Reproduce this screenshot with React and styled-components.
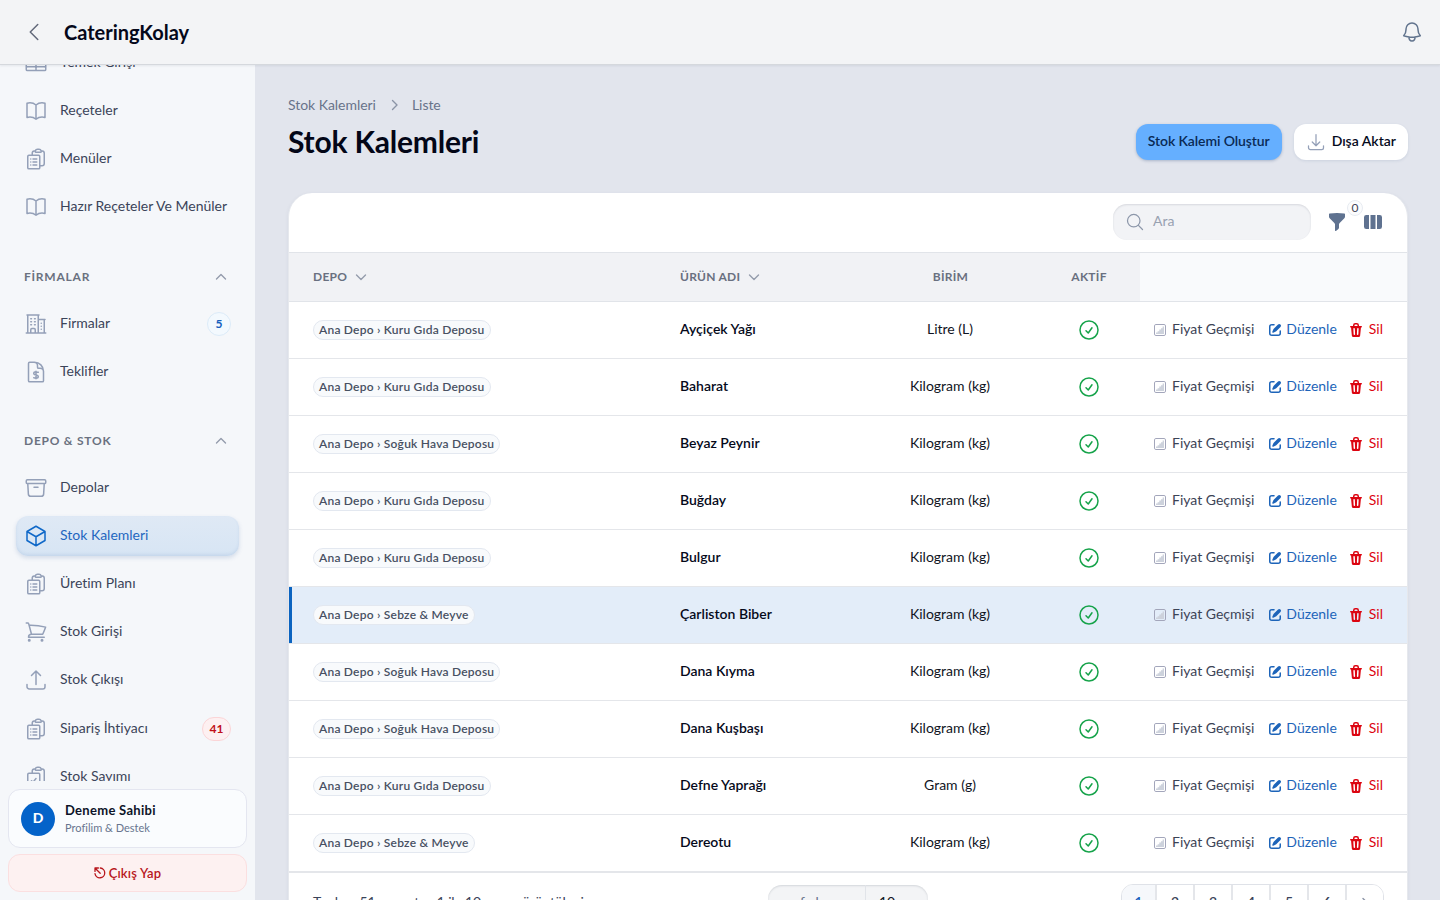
import React from 'react';
import styled, { createGlobalStyle, css } from 'styled-components';
import {
    HiOutlineTableCells,
    HiOutlineBookOpen,
    HiOutlineClipboardDocumentList,
    HiOutlineClipboardDocumentCheck,
    HiOutlineBuildingOffice2,
    HiOutlineArchiveBox,
    HiOutlineCube,
    HiOutlineShoppingCart,
    HiOutlineArrowUpTray,
    HiOutlineArrowDownTray,
    HiOutlineBell,
    HiOutlineChevronLeft,
    HiOutlineMagnifyingGlass,
    HiOutlineCheckCircle,
} from 'react-icons/hi2';

const stroke = {
    fill: 'none',
    stroke: 'currentColor',
    strokeLinecap: 'round',
    strokeLinejoin: 'round',
};

const DocumentDollar = () => (
    <svg viewBox="0 0 24 24" strokeWidth="1.5" {...stroke}>
        <path d="M19.5 14.25v-2.625a3.375 3.375 0 0 0-3.375-3.375h-1.5A1.125 1.125 0 0 1 13.5 7.125v-1.5a3.375 3.375 0 0 0-3.375-3.375H8.25m3.75 9v7.5m2.25-6.466a9.016 9.016 0 0 0-3.461-.203c-.536.072-.974.478-1.021 1.017a4.559 4.559 0 0 0-.018.402c0 .464.336.844.775.994l2.95 1.012c.44.15.775.53.775.994 0 .136-.006.27-.018.402-.047.539-.485.945-1.021 1.017a9.077 9.077 0 0 1-3.461-.203M10.5 2.25H5.625c-.621 0-1.125.504-1.125 1.125v17.25c0 .621.504 1.125 1.125 1.125h12.75c.621 0 1.125-.504 1.125-1.125V11.25a9 9 0 0 0-9-9Z" />
    </svg>
);

const Chevron = ({ d = 'M1.5 2l4.5 4.5 4.5-4.5', w = 12, h = 8 }) => (
    <svg width={w} height={h} viewBox={`0 0 ${w} ${h}`} strokeWidth="1.4" {...stroke}>
        <path d={d} />
    </svg>
);

const ChartIcon = () => (
    <svg width="12" height="12" viewBox="0 0 12 12">
        <rect x="0.5" y="0.5" width="11" height="11" rx="1.4" fill="none" stroke="#a3a6bb" />
        <path d="M2 10V8.6h1.6V7.2h1.7V5.6h1.7V4.2h1.6V2.6H10V10z" fill="#cdd2dc" />
    </svg>
);

const PencilIcon = () => (
    <svg width="16" height="16" viewBox="0 0 16 16" fill="currentColor">
        <path d="M13.488 2.513a1.75 1.75 0 0 0-2.475 0L6.75 6.774a2.75 2.75 0 0 0-.596.892l-.848 2.047a.75.75 0 0 0 .98.98l2.047-.848a2.75 2.75 0 0 0 .892-.596l4.261-4.262a1.75 1.75 0 0 0 0-2.474Z" />
        <path d="M4.75 3.5c-.69 0-1.25.56-1.25 1.25v6.5c0 .69.56 1.25 1.25 1.25h6.5c.69 0 1.25-.56 1.25-1.25V9A.75.75 0 0 1 14 9v2.25A2.75 2.75 0 0 1 11.25 14h-6.5A2.75 2.75 0 0 1 2 11.25v-6.5A2.75 2.75 0 0 1 4.75 2H7a.75.75 0 0 1 0 1.5H4.75Z" />
    </svg>
);

const TrashIcon = () => (
    <svg width="16" height="16" viewBox="0 0 16 16" fill="currentColor">
        <path
            fillRule="evenodd"
            d="M5 3.25V4H2.75a.75.75 0 0 0 0 1.5h.3l.815 8.15A1.5 1.5 0 0 0 5.357 15h5.285a1.5 1.5 0 0 0 1.493-1.35l.815-8.15h.3a.75.75 0 0 0 0-1.5H11v-.75A2.25 2.25 0 0 0 8.75 1h-1.5A2.25 2.25 0 0 0 5 3.25Zm2.25-.75a.75.75 0 0 0-.75.75V4h3v-.75a.75.75 0 0 0-.75-.75h-1.5ZM6.05 6a.75.75 0 0 1 .787.713l.275 5.5a.75.75 0 0 1-1.498.075l-.275-5.5A.75.75 0 0 1 6.05 6Zm3.9 0a.75.75 0 0 1 .712.787l-.275 5.5a.75.75 0 0 1-1.498-.075l.275-5.5a.75.75 0 0 1 .786-.711Z"
        />
    </svg>
);

const FunnelIcon = () => (
    <svg width="20" height="20" viewBox="0 0 20 20" fill="currentColor">
        <path d="M2.628 1.601C5.028 1.206 7.49 1 10 1s4.973.206 7.372.601a.75.75 0 0 1 .628.74v2.288a2.25 2.25 0 0 1-.659 1.59l-4.682 4.683a2.25 2.25 0 0 0-.659 1.59v3.037c0 .684-.31 1.33-.844 1.757l-1.937 1.55A.75.75 0 0 1 8 18.25v-5.757a2.25 2.25 0 0 0-.659-1.591L2.659 6.22A2.25 2.25 0 0 1 2 4.629V2.34a.75.75 0 0 1 .628-.74Z" />
    </svg>
);

const ColumnsIcon = () => (
    <svg width="20" height="20" viewBox="0 0 20 20" fill="currentColor">
        <path d="M14 17h2.75A2.25 2.25 0 0 0 19 14.75v-9.5A2.25 2.25 0 0 0 16.75 3H14v14ZM12.5 3h-5v14h5V3ZM3.25 3H6v14H3.25A2.25 2.25 0 0 1 1 14.75v-9.5A2.25 2.25 0 0 1 3.25 3Z" />
    </svg>
);

const LogoutIcon = () => (
    <svg width="12" height="12" viewBox="0 0 12 12" strokeWidth="1.3" {...stroke}>
        <path d="M6.3 1A4.9 4.9 0 1 1 1 6.6M1.2 1.2l5 5M1 4.4V1h3.4" />
    </svg>
);

const groups = [
    {
        items: [
            { label: 'Yemek Girişi', icon: HiOutlineTableCells },
            { label: 'Reçeteler', icon: HiOutlineBookOpen },
            { label: 'Menüler', icon: HiOutlineClipboardDocumentList },
            { label: 'Hazır Reçeteler Ve Menüler', icon: HiOutlineBookOpen },
        ],
    },
    {
        title: 'FİRMALAR',
        items: [
            { label: 'Firmalar', icon: HiOutlineBuildingOffice2, badge: '5' },
            { label: 'Teklifler', icon: DocumentDollar },
        ],
    },
    {
        title: 'DEPO & STOK',
        items: [
            { label: 'Depolar', icon: HiOutlineArchiveBox },
            { label: 'Stok Kalemleri', icon: HiOutlineCube, active: true },
            { label: 'Üretim Planı', icon: HiOutlineClipboardDocumentList },
            { label: 'Stok Girişi', icon: HiOutlineShoppingCart },
            { label: 'Stok Çıkışı', icon: HiOutlineArrowUpTray },
            { label: 'Sipariş İhtiyacı', icon: HiOutlineClipboardDocumentList, badge: '41', danger: true },
            { label: 'Stok Sayımı', icon: HiOutlineClipboardDocumentCheck },
        ],
    },
];

const KURU = 'Ana Depo › Kuru Gıda Deposu';
const SOGUK = 'Ana Depo › Soğuk Hava Deposu';
const SEBZE = 'Ana Depo › Sebze & Meyve';

const rows = [
    [KURU, 'Ayçiçek Yağı', 'Litre (L)'],
    [KURU, 'Baharat', 'Kilogram (kg)'],
    [SOGUK, 'Beyaz Peynir', 'Kilogram (kg)'],
    [KURU, 'Buğday', 'Kilogram (kg)'],
    [KURU, 'Bulgur', 'Kilogram (kg)'],
    [SEBZE, 'Çarliston Biber', 'Kilogram (kg)'],
    [SOGUK, 'Dana Kıyma', 'Kilogram (kg)'],
    [SOGUK, 'Dana Kuşbaşı', 'Kilogram (kg)'],
    [KURU, 'Defne Yaprağı', 'Gram (g)'],
    [SEBZE, 'Dereotu', 'Kilogram (kg)'],
];

const selectedRow = 5;

const App = () => (
    <>
        <GlobalStyle />
        <Page>
            <Topbar>
                <BackButton><HiOutlineChevronLeft /></BackButton>
                <Brand>CateringKolay</Brand>
                <BellButton><HiOutlineBell /></BellButton>
            </Topbar>
            <Body>
                <Sidebar>
                    <Nav>
                        {groups.map((group, i) => (
                            <NavGroup key={i}>
                                {group.title && (
                                    <GroupTitle>
                                        {group.title}
                                        <Chevron d="M1.5 6L6 1.5 10.5 6" />
                                    </GroupTitle>
                                )}
                                {group.items.map(({ label, icon: Icon, badge, danger, active }) => (
                                    <NavItem key={label} $active={active} $tall={danger}>
                                        <Icon />
                                        <NavLabel>{label}</NavLabel>
                                        {badge && <NavBadge $danger={danger}>{badge}</NavBadge>}
                                    </NavItem>
                                ))}
                            </NavGroup>
                        ))}
                    </Nav>
                    <SidebarFooter>
                        <Profile>
                            <Avatar>D</Avatar>
                            <ProfileText>
                                <ProfileName>Deneme Sahibi</ProfileName>
                                <ProfileSub>Profilim &amp; Destek</ProfileSub>
                            </ProfileText>
                        </Profile>
                        <Logout><LogoutIcon />Çıkış Yap</Logout>
                    </SidebarFooter>
                </Sidebar>
                <Main>
                    <Breadcrumb>
                        <span>Stok Kalemleri</span>
                        <Chevron d="M2.5 1.5L7 6l-4.5 4.5" w={8} h={12} />
                        <span>Liste</span>
                    </Breadcrumb>
                    <Heading>
                        <Title>Stok Kalemleri</Title>
                        <Actions>
                            <Button $primary><Lifted>Stok Kalemi Oluştur</Lifted></Button>
                            <Button><HiOutlineArrowDownTray /><Lifted>Dışa Aktar</Lifted></Button>
                        </Actions>
                    </Heading>
                    <Card>
                        <Toolbar>
                            <Search><HiOutlineMagnifyingGlass /><Lifted>Ara</Lifted></Search>
                            <Tool>
                                <FunnelIcon />
                                <ToolBadge>0</ToolBadge>
                            </Tool>
                            <Tool><ColumnsIcon /></Tool>
                        </Toolbar>
                        <HeadRow>
                            <HeadCell $pad>DEPO <Chevron /></HeadCell>
                            <HeadCell $pad>ÜRÜN ADI <Chevron /></HeadCell>
                            <HeadCell $center>BİRİM</HeadCell>
                            <HeadCell $center>AKTİF</HeadCell>
                            <HeadCell $plain />
                        </HeadRow>
                        {rows.map(([depot, name, unit], i) => (
                            <Row key={name} $selected={i === selectedRow}>
                                <Cell $pad><Pill>{depot}</Pill></Cell>
                                <Cell $pad><ProductName>{name}</ProductName></Cell>
                                <Cell $center><Lifted>{unit}</Lifted></Cell>
                                <Cell $center><Check /></Cell>
                                <RowActions>
                                    <RowAction $color="#3b4356" $gap="6px"><ChartIcon /><Lifted>Fiyat Geçmişi</Lifted></RowAction>
                                    <RowAction $color="#1d64b9" $gap="3px" $offset="1px"><PencilIcon /><Lifted>Düzenle</Lifted></RowAction>
                                    <RowAction $color="#dc0511" $gap="5px" $offset="-1px"><TrashIcon /><Lifted>Sil</Lifted></RowAction>
                                </RowActions>
                            </Row>
                        ))}
                        <Footer>
                            <Summary>Toplam 51 sonuçtan 1 ile 10 arası görüntüleniyor</Summary>
                            <PerPage>
                                <PerPageLabel>sayfa başına</PerPageLabel>
                                <PerPageValue>10</PerPageValue>
                            </PerPage>
                            <Pager>
                                {['1', '2', '3', '4', '5', '6'].map((p) => (
                                    <PageButton key={p} $active={p === '1'}>{p}</PageButton>
                                ))}
                                <PageButton><Chevron d="M2 1.5L6.5 6 2 10.5" w={8} h={12} /></PageButton>
                            </Pager>
                        </Footer>
                    </Card>
                </Main>
            </Body>
        </Page>
    </>
);

const GlobalStyle = createGlobalStyle`
    * {
        box-sizing: border-box;
    }
    body {
        margin: 0;
        overflow: hidden;
        font-family: Lato, "Noto Sans", sans-serif;
        font-size: 14px;
        line-height: 20px;
        font-variant-ligatures: none;
        color: #101423;
    }
    svg {
        display: block;
        flex-shrink: 0;
    }
`;

const Page = styled.div`
    height: 900px;
    display: flex;
    flex-direction: column;
    overflow: hidden;
    background: #e2e5ed;
`;

const Topbar = styled.header`
    height: 65px;
    flex-shrink: 0;
    display: flex;
    align-items: center;
    padding: 0 16px 0 22px;
    background: #f3f4f6;
    border-bottom: 1px solid #d5d8dd;
    box-shadow: 0 1px 2px rgba(30, 40, 60, 0.08);
    z-index: 1;
`;

const BackButton = styled.div`
    width: 42px;
    color: #62697a;

    svg {
        width: 24px;
        height: 24px;
    }
`;

const Brand = styled.div`
    flex: 1;
    font-size: 20px;
    font-weight: 700;
    letter-spacing: -0.02px;
    color: #05081a;
`;

const BellButton = styled.div`
    color: #62748e;

    svg {
        width: 24px;
        height: 24px;
    }
`;

const Body = styled.div`
    flex: 1;
    min-height: 0;
    display: flex;
`;

const Sidebar = styled.aside`
    width: 255px;
    flex-shrink: 0;
    display: flex;
    flex-direction: column;
    background: #f5f7fa;
`;

const Nav = styled.nav`
    height: 716px;
    padding: 0 16px;
    overflow: hidden;
    display: flex;
    flex-direction: column;
    justify-content: flex-end;
    gap: 30px;

    & > :last-child {
        margin-bottom: -16px;
    }
`;

const NavGroup = styled.div`
    display: flex;
    flex-direction: column;
    gap: 8px;

    &:first-child {
        margin-bottom: 1px;
    }
`;

const GroupTitle = styled.div`
    height: 38px;
    display: flex;
    align-items: center;
    justify-content: space-between;
    padding: 0 12px 0 8px;
    font-size: 12px;
    font-weight: 700;
    letter-spacing: 0.76px;
    color: #6a7180;

    svg {
        color: #949cac;
    }
`;

const NavItem = styled.div`
    height: ${props => (props.$tall ? '41px' : '40px')};
    flex-shrink: 0;
    display: flex;
    align-items: center;
    gap: 12px;
    padding: 0 8px;
    border-radius: 12px;
    color: #3b4459;

    svg {
        width: 24px;
        height: 24px;
        color: #94a0b8;
    }

    ${props => props.$active && css`
        color: #1f66c0;
        background: linear-gradient(#dfe9f5, #d7e5f4);
        box-shadow: 0 2px 4px rgba(60, 100, 160, 0.18), inset 0 -2px 3px rgba(110, 150, 200, 0.16);

        svg {
            color: #0f68c8;
        }
    `}
`;

const NavLabel = styled.div`
    flex: 1;
    padding-bottom: 2px;
    white-space: nowrap;
`;

const NavBadge = styled.div`
    min-width: 24px;
    height: 24px;
    padding: 0 6.5px;
    display: flex;
    align-items: center;
    justify-content: center;
    border: 1px solid ${props => (props.$danger ? '#fbd5d7' : '#dcebf8')};
    border-radius: 12px;
    font-size: 12px;
    font-weight: 700;
    color: ${props => (props.$danger ? '#c11119' : '#1560bd')};
    background: ${props => (props.$danger ? '#fdf0f1' : '#f3f9fe')};
`;

const SidebarFooter = styled.div`
    flex: 1;
    display: flex;
    flex-direction: column;
    gap: 6px;
    padding: 8px 8px 0;
`;

const Profile = styled.div`
    height: 59px;
    display: flex;
    align-items: center;
    gap: 10px;
    padding: 0 12px;
    border: 1px solid #e4e6f0;
    border-radius: 12px;
    background: #fafcfe;
`;

const Avatar = styled.div`
    width: 34px;
    height: 34px;
    padding-bottom: 1px;
    display: flex;
    align-items: center;
    justify-content: center;
    border-radius: 50%;
    font-weight: 900;
    color: white;
    background: #0463c9;
`;

const ProfileText = styled.div`
    padding-bottom: 1px;
`;

const ProfileName = styled.div`
    font-size: 13px;
    line-height: 18px;
    font-weight: 700;
    letter-spacing: 0.3px;
    color: #0d1428;
`;

const ProfileSub = styled.div`
    font-size: 11px;
    line-height: 17px;
    color: #68758f;
`;

const Logout = styled.div`
    height: 38px;
    display: flex;
    align-items: center;
    justify-content: center;
    gap: 3px;
    border: 1px solid #fbdfe0;
    border-radius: 12px;
    font-size: 13px;
    font-weight: 600;
    letter-spacing: 0.2px;
    color: #b8161c;
    background: #fdf1f1;
`;

const Main = styled.main`
    flex: 1;
    padding: 30px 32px 0 33px;
`;

const Breadcrumb = styled.div`
    height: 20px;
    display: flex;
    align-items: center;
    gap: 14px;
    letter-spacing: -0.04px;
    color: #68738a;

    svg {
        color: #8b94a6;
    }
`;

const Heading = styled.div`
    height: 36px;
    margin-top: 9px;
    display: flex;
    align-items: center;
    justify-content: space-between;
`;

const Title = styled.h1`
    margin: 0;
    padding-bottom: 2px;
    font-size: 30px;
    line-height: 36px;
    font-weight: 700;
    letter-spacing: -0.2px;
    color: #030617;
`;

const Actions = styled.div`
    display: flex;
    gap: 12px;
`;

const Button = styled.div`
    height: 36px;
    display: flex;
    align-items: center;
    gap: 6px;
    padding: 0 12px;
    border-radius: 12px;
    font-weight: 600;
    letter-spacing: ${props => (props.$primary ? '-0.1px' : 0)};
    white-space: nowrap;
    color: ${props => (props.$primary ? '#0a2a55' : '#050a1c')};
    background: ${props => (props.$primary ? '#65afff' : 'white')};
    box-shadow: 0 1px 3px rgba(40, 70, 120, ${props => (props.$primary ? 0.3 : 0.12)});

    svg {
        width: 20px;
        height: 20px;
        color: #94a0b8;
    }
`;

/* Lato sits a touch low next to icons */
const Lifted = styled.span`
    padding-bottom: 2px;
`;

const Card = styled.section`
    height: 800px;
    margin-top: 33px;
    overflow: hidden;
    border-left: 1px solid #e6e8ed;
    border-right: 1px solid #e6e8ed;
    border-radius: 24px;
    background: white;
    box-shadow: 0 1px 4px rgba(40, 50, 80, 0.06);
`;

const Toolbar = styled.div`
    height: 59px;
    display: flex;
    align-items: center;
    justify-content: flex-end;
    gap: 16px;
    padding: 0 24px 1px 0;
`;

const Search = styled.div`
    width: 198px;
    height: 36px;
    display: flex;
    align-items: center;
    gap: 8px;
    padding: 0 12px;
    border-radius: 14px;
    color: #98a1b1;
    background: #f2f3f6;
    box-shadow: inset 0 1px 2px rgba(50, 60, 80, 0.14);

    svg {
        width: 20px;
        height: 20px;
        color: #8d97aa;
    }
`;

const Tool = styled.div`
    position: relative;
    color: #5f7290;
`;

const ToolBadge = styled.div`
    position: absolute;
    left: 20px;
    top: -12px;
    width: 16px;
    height: 16px;
    border: 1px solid #e7ebf1;
    border-radius: 8px;
    font-size: 12px;
    line-height: 14px;
    text-align: center;
    color: #3e4656;
    background: #fbfcfd;
`;

const columns = css`
    display: grid;
    grid-template-columns: 367px 207px 174px 103px 1fr;
`;

const HeadRow = styled.div`
    ${columns}
    height: 50px;
    border-top: 1px solid #e1e4e9;
    border-bottom: 1px solid #e1e4e9;
`;

const HeadCell = styled.div`
    display: flex;
    align-items: center;
    gap: 8px;
    justify-content: ${props => (props.$center ? 'center' : 'flex-start')};
    padding-left: ${props => (props.$pad ? '24px' : '1px')};
    font-size: 12px;
    font-weight: 700;
    letter-spacing: 0.25px;
    color: #697080;
    background: ${props => (props.$plain ? '#f9fafc' : '#f1f2f5')};

    svg {
        color: #949cac;
    }
`;

const Row = styled.div`
    ${columns}
    height: 57px;
    border-bottom: 1px solid #e4e6ea;

    ${props => props.$selected && css`
        background: #e3edf9;
        box-shadow: inset 3px 0 0 #0b63c0;
    `}
`;

const Cell = styled.div`
    display: flex;
    align-items: center;
    justify-content: ${props => (props.$center ? 'center' : 'flex-start')};
    padding-left: ${props => (props.$pad ? '24px' : 0)};
`;

const Pill = styled.div`
    height: 20px;
    padding: 0 5px;
    border: 1px solid #e3e8f0;
    border-radius: 10px;
    font-size: 12px;
    line-height: 18px;
    font-weight: 600;
    letter-spacing: 0.22px;
    white-space: nowrap;
    color: #475062;
    background: #f8fafc;
`;

const ProductName = styled.div`
    padding-bottom: 2px;
    font-weight: 600;
    color: #05091a;
`;

const Check = styled(HiOutlineCheckCircle)`
    width: 24px;
    height: 24px;
    color: #16a34a;
`;

const RowActions = styled.div`
    display: flex;
    align-items: center;
    justify-content: flex-end;
    gap: 12px;
    padding-right: 24px;
`;

const RowAction = styled.div`
    display: flex;
    align-items: center;
    gap: ${props => props.$gap};
    margin-left: ${props => props.$offset || 0};
    white-space: nowrap;
    color: ${props => props.$color};
`;

const Footer = styled.div`
    display: grid;
    grid-template-columns: 1fr 160px 1fr;
    align-items: start;
    padding: 11px 23px 12px;
    border-top: 1px solid #e4e6ea;
`;

const Summary = styled.div`
    padding: 8px 0 0 1px;
    letter-spacing: -0.18px;
    white-space: nowrap;
    color: #3b4459;
`;

const PerPage = styled.div`
    height: 36px;
    margin-top: 1px;
    display: flex;
    border-radius: 14px;
    background: #f3f4f6;
    box-shadow: inset 0 1px 2px rgba(50, 60, 80, 0.16);
`;

const PerPageLabel = styled.div`
    width: 98px;
    padding: 7px 0 0 12px;
    border-right: 1px solid #e1e4e9;
    color: #68738a;
`;

const PerPageValue = styled.div`
    padding: 7px 0 0 13px;
`;

const Pager = styled.div`
    justify-self: end;
    display: flex;
    height: 38px;
    overflow: hidden;
    border: 1px solid #dfe2e8;
    border-radius: 12px;
    font-weight: 600;
    color: #3b4459;
`;

const PageButton = styled.div`
    display: flex;
    justify-content: center;
    width: ${props => (props.$active ? '33px' : '38px')};
    padding-top: 7px;
    color: ${props => (props.$active ? '#1560bd' : 'inherit')};
    background: ${props => (props.$active ? '#f6f8fb' : 'white')};

    & + & {
        border-left: 2px solid #e4e6ea;
    }

    svg {
        margin-top: 5px;
        color: #8b94a6;
    }
`;

export default App;
